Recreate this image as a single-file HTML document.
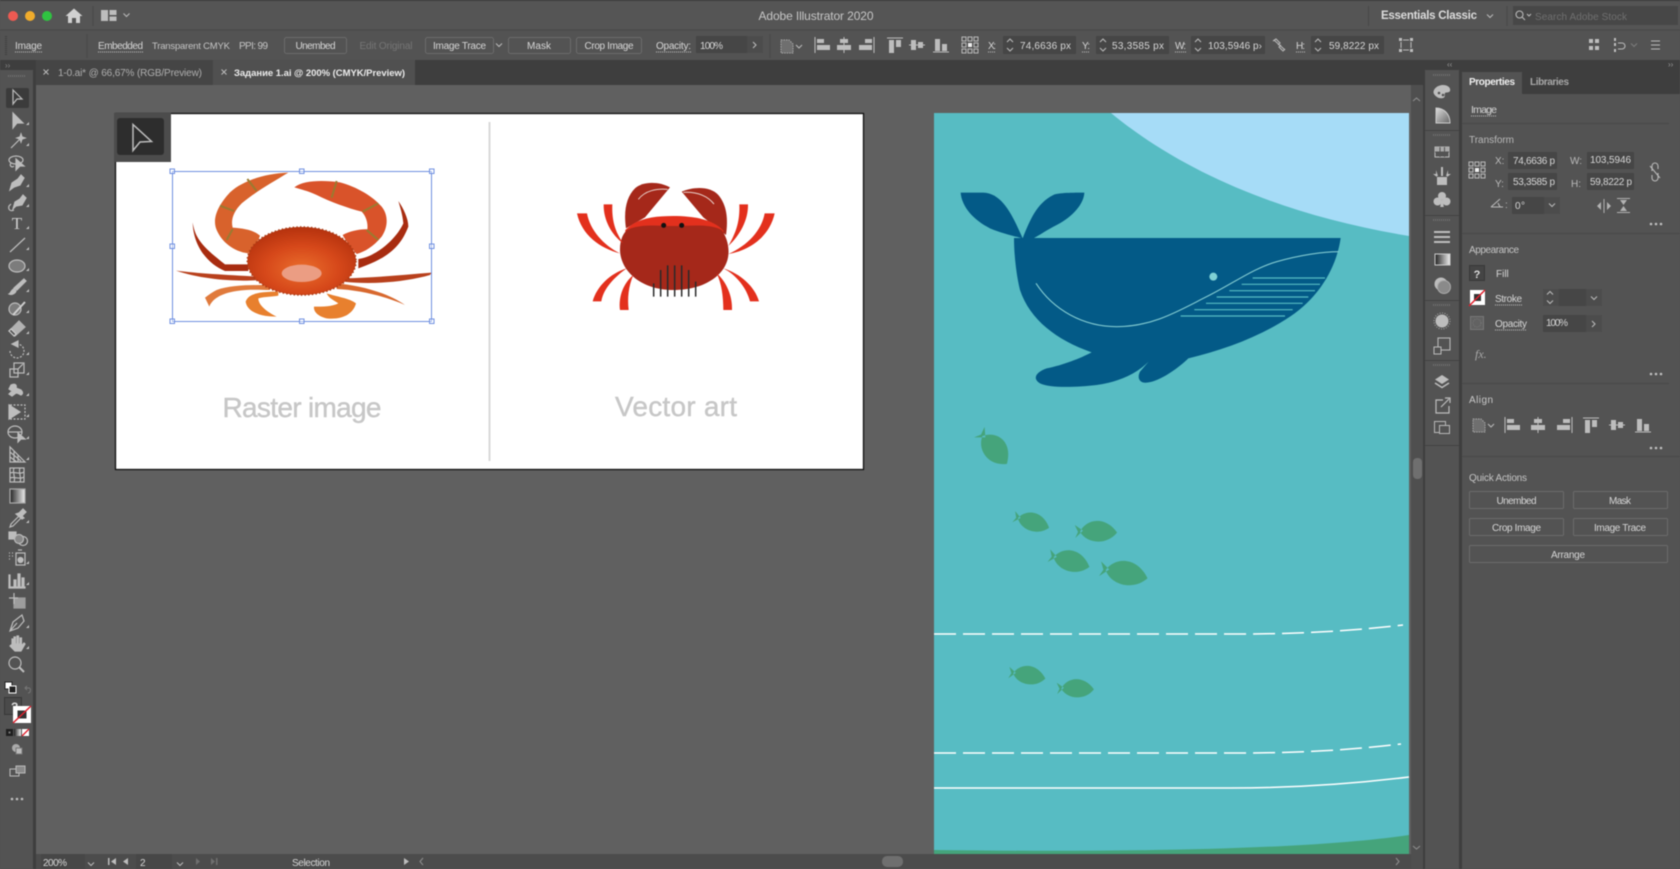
<!DOCTYPE html>
<html><head><meta charset="utf-8"><title>Adobe Illustrator 2020</title>
<style>
html,body{margin:0;padding:0;background:#535353;overflow:hidden}
svg{display:block;position:absolute;left:0;top:0;filter:blur(.4px)}
text{font-family:"Liberation Sans",sans-serif;font-size:10px;fill:#d6d6d6}
.b{fill:none;stroke:#6b6b6b;stroke-width:1}
.f{fill:#464646}
.s{fill:none;stroke:#bdbdbd;stroke-width:1.2}
.k{fill:none;stroke:#b8b8b8;stroke-width:1.1}
.i{fill:#bdbdbd}
.u{stroke:#bdbdbd;stroke-width:1;stroke-dasharray:1 1}
.c{text-anchor:middle}
</style></head><body>
<svg width="1680" height="869" viewBox="0 0 1680 869" xmlns="http://www.w3.org/2000/svg">
<defs>
<g id="a1"><path class="i" d="M-7.5-8h1v16h-1zM-5-6h7v4h-7zM-5 0h13v5h-13z"/></g>
<g id="a2"><path class="i" d="M-.5-8h1v16h-1zM-4-6h8v4h-8zM-7 0h14v5h-14z"/></g>
<g id="a3"><path class="i" d="M6.500-8h1v16h-1zM-2-6h7v4h-7zM-8 0h13v5h-13z"/></g>
<g id="a4"><path class="i" d="M-8-7.500h16v1h-16zM-6-5h5v13h-5zM1-5h5v7h-5z"/></g>
<g id="a5"><path class="i" d="M-8-.5h16v1h-16zM-6-5h5v10h-5zM1-3h5v6h-5z"/></g>
<g id="a6"><path class="i" d="M-8 6.500h16v1h-16zM-6-6h5v12h-5zM1-1h5v7h-5z"/></g>
<g id="doc"><path d="M-6-6h8l4 4v9h-12z" fill="#6f6f6f" stroke="#a8a8a8" stroke-dasharray="1.500 1"/><path class="k" d="M9-1l3 3 3-3"/></g>
<g id="ref"><g fill="none" stroke="#b8b8b8"><rect x="-8" y="-8" width="4" height="4"/><rect x="-2" y="-8" width="4" height="4"/><rect x="4" y="-8" width="4" height="4"/><rect x="-8" y="-2" width="4" height="4"/><rect x="4" y="-2" width="4" height="4"/><rect x="-8" y="4" width="4" height="4"/><rect x="-2" y="4" width="4" height="4"/><rect x="4" y="4" width="4" height="4"/></g><rect x="-2" y="-2" width="4" height="4" fill="#eee"/></g>
<g id="spin"><path class="k" d="M-3-3l3-3 3 3M-3 3l3 3 3-3"/></g>
<path id="chev" class="k" d="M-3-1.500l3 3 3-3"/>
<path id="fish" fill="#45a47b" d="M6 1C12-11 31-15 43 3 32 16 12 13 6 1ZM9 0L1-6 4 1 1 7Z"/>
<g id="dots"><circle cx="-5" r="1.300" fill="#c0c0c0"/><circle r="1.300" fill="#c0c0c0"/><circle cx="5" r="1.300" fill="#c0c0c0"/></g>
<radialGradient id="cb" cx=".5" cy=".62" r=".62"><stop offset="0" stop-color="#ea6e2c"/><stop offset=".55" stop-color="#d6481a"/><stop offset="1" stop-color="#b5320e"/></radialGradient>
<linearGradient id="gr" x1="0" x2="1"><stop offset="0" stop-color="#222"/><stop offset="1" stop-color="#eee"/></linearGradient>
<linearGradient id="gs" x1="0" y1="0" x2="1" y2="1"><stop offset="0" stop-color="#ddd"/><stop offset="1" stop-color="#666"/></linearGradient>
</defs>

<!-- chrome backgrounds -->
<rect width="1680" height="869" fill="#535353"/>
<rect width="1680" height="1" fill="#3a3a3a"/>
<rect y="1" width="1680" height="29" fill="#555"/>
<rect y="30" width="1680" height="30" fill="#535353"/>
<rect y="29.500" width="1680" height="1" fill="#474747"/>
<rect y="60" width="1680" height="25" fill="#3e3e3e"/>
<rect y="60" width="34" height="10" fill="#3e3e3e"/>
<rect x="0" y="70" width="33" height="799" fill="#535353"/>
<rect x="33" y="70" width="3" height="799" fill="#3e3e3e"/>
<rect x="36" y="85" width="1375" height="769" fill="#606060"/>

<!-- title bar -->
<circle cx="13" cy="16" r="5" fill="#ee5a52"/><circle cx="30" cy="16" r="5" fill="#f0ac2c"/><circle cx="47" cy="16" r="5" fill="#2fc341"/>
<path d="M74 8.500L65.500 16H68v7h4v-5h4v5h4v-7h2.500z" fill="#d0d0d0"/>
<path d="M93 6v20" stroke="#484848"/>
<path d="M101 10h7v11h-7zM109.500 10h7v5h-7zM109.500 16.500h7v4.500h-7z" fill="#bdbdbd"/>
<use href="#chev" x="126.500" y="15"/>
<text x="816" y="20" class="c" style="font-size:12px;fill:#c6c6c6" textLength="115">Adobe Illustrator 2020</text>
<text x="1381" y="19" style="font-size:11.500px;font-weight:bold;fill:#dcdcdc" textLength="96">Essentials Classic</text>
<use href="#chev" x="1490" y="16"/>
<path d="M1368.500 6v20M1507 6v20" stroke="#484848"/>
<rect x="1513" y="6" width="165" height="19" fill="#474747"/>
<circle cx="1519.500" cy="14.500" r="3.500" class="k"/><path class="k" d="M1522 17l3 3M1527 14l2 2 2-2"/>
<text x="1535" y="20" style="fill:#6f6f6f" textLength="92">Search Adobe Stock</text>

<!-- control bar -->
<text x="15" y="49" textLength="27">Image</text><path class="u" d="M15 52h27"/>
<path d="M6 36v20" stroke="#3f3f3f" stroke-width="2" stroke-dasharray="1 1"/>
<path d="M87 34v24" stroke="#484848"/>
<text x="98" y="49" textLength="45">Embedded</text><path class="u" d="M98 52h45"/>
<text x="152" y="49" textLength="78" style="fill:#c4c4c4;font-size:9.500px">Transparent CMYK</text>
<text x="239" y="49" textLength="29" style="fill:#c4c4c4">PPI: 99</text>
<rect class="b" x="284.500" y="37.500" width="62" height="16" rx="2"/><text x="315.500" y="49" class="c" textLength="40">Unembed</text>
<text x="359.500" y="49" style="fill:#757575" textLength="53">Edit Original</text>
<rect class="b" x="425.500" y="37.500" width="68" height="16" rx="2"/><text x="459.500" y="49" class="c" textLength="53">Image Trace</text>
<use href="#chev" x="499" y="45"/>
<rect class="b" x="508.500" y="37.500" width="62" height="16" rx="2"/><text x="539" y="49" class="c" textLength="24">Mask</text>
<rect class="b" x="576.500" y="37.500" width="65" height="16" rx="2"/><text x="609" y="49" class="c" textLength="49">Crop Image</text>
<text x="656" y="49" textLength="35">Opacity:</text><path class="u" d="M656 52h35"/>
<rect class="f" x="696" y="36" width="51" height="17"/><rect x="747" y="36" width="16" height="17" fill="#4c4c4c"/>
<text x="700" y="49" textLength="23">100%</text><path class="k" d="M753 42l3 3-3 3"/>
<path d="M770 34v24" stroke="#484848"/>
<use href="#doc" x="787" y="46"/>
<use href="#a1" x="822" y="45"/><use href="#a2" x="844" y="45"/><use href="#a3" x="867" y="45"/>
<use href="#a4" x="895" y="45"/><use href="#a5" x="917" y="45"/><use href="#a6" x="941" y="45"/>
<use href="#ref" x="970" y="45"/>
<text x="988" y="49" textLength="8">X:</text><path class="u" d="M988 52h8"/>
<rect class="f" x="1003" y="36" width="73" height="18"/><use href="#spin" x="1010" y="45"/><text x="1020" y="49" textLength="51">74,6636 px</text>
<text x="1082" y="49" textLength="8">Y:</text><path class="u" d="M1082 52h8"/>
<rect class="f" x="1096" y="36" width="73" height="18"/><use href="#spin" x="1103" y="45"/><text x="1112" y="49" textLength="52">53,3585 px</text>
<text x="1175" y="49" textLength="11">W:</text><path class="u" d="M1175 52h11"/>
<rect class="f" x="1191" y="36" width="74" height="18"/><use href="#spin" x="1198" y="45"/><text x="1208" y="49" textLength="54">103,5946 p›</text>
<path class="k" d="M1273 41l3-2 4 4-2 2M1285 49l-2 2-4-4 2-2M1274 40l11 10"/>
<text x="1296" y="49" textLength="9">H:</text><path class="u" d="M1296 52h9"/>
<rect class="f" x="1311" y="36" width="73" height="18"/><use href="#spin" x="1318" y="45"/><text x="1329" y="49" textLength="50">59,8222 px</text>
<g transform="translate(1406,45)"><path class="k" d="M-5-3v6M5-3v6M-3-5h6M-3 5h6"/><path class="i" d="M-7-7h3v3h-3zM4-7h3v3h-3zM-7 4h3v3h-3zM4 4h3v3h-3z"/></g>
<g transform="translate(1594,45)"><path class="i" d="M-5-6h4v4h-4zM1-6h4v4h-4zM-5 1h4v4h-4zM1 1h4v4h-4z"/></g>
<g transform="translate(1620,45)"><path class="i" d="M-6-7h2v3h-2zM-6-2h2v3h-2zM-6 4h2v3h-2z"/><path class="k" d="M-2-2h4a3 3 0 0 1 0 6h-4"/></g>
<use href="#chev" x="1634" y="45" opacity=".4"/>
<path class="k" d="M1651 41h9M1651 45h9M1651 49h9"/>

<!-- tabs -->
<rect x="36" y="60" width="177" height="25" fill="#454545"/>
<rect x="213" y="60" width="202" height="25" fill="#505050"/>
<path d="M43.500 69.500l5 5m0-5l-5 5M221.500 69.500l5 5m0-5l-5 5" stroke="#bbb" fill="none"/>
<text x="58" y="76" style="fill:#aeaeae" textLength="144">1-0.ai* @ 66,67% (RGB/Preview)</text>
<text x="234" y="76" style="fill:#ececec;font-weight:bold;font-size:9.500px" textLength="171">Задание 1.ai @ 200% (CMYK/Preview)</text>
<text x="5" y="68" style="font-size:8px;fill:#888">››</text>
<path d="M8 76h18" stroke="#707070" stroke-width="2" stroke-dasharray="1 1"/>

<!-- left tools -->
<rect x="6" y="88" width="23" height="20" rx="2" fill="#3b3b3b"/>
<g class="s">
<g transform="translate(17,97)"><path class="s" d="M-4-7L5 2 0 2-4 7Z"/></g>
<g transform="translate(17,120)"><path class="i" d="M-4-7L6 3 0 3-4 8Z"/></g>
<g transform="translate(17,141)"><path class="s" d="M-6 7L3-2"/><path class="i" d="M4-7l1 3 3 1-3 1-1 3-1-3-3-1 3-1z"/></g>
<g transform="translate(17,162)"><ellipse class="s" cx="-1" cy="-2" rx="7" ry="4"/><path class="i" d="M-1-3L7 4 3 4-1 8Z"/><path class="s" d="M-6 1c-2 3 1 5 3 3"/></g>
<g transform="translate(17,182)"><path class="i" d="M4-7L7-4 3 3-3 5-7 8-5 1 1-3Z"/></g>
<g transform="translate(17,202)"><path class="i" d="M6-7L9-4 5 3-1 4-4 7-2 0 3-3Z"/><path class="s" d="M-3 8c-4 2-6-1-5-4l2-2"/></g>
<text x="17" y="229" class="c" style="font-size:17px;fill:#cfcfcf;font-family:'Liberation Serif',serif;stroke:none">T</text>
<path class="s" d="M10 252L25 238"/>
<ellipse cx="17" cy="266" rx="8" ry="6" fill="#7c7c7c" stroke="#bdbdbd"/>
<g transform="translate(17,287)"><path class="i" d="M7-8L9-6 0 3-3 1Z"/><path class="i" d="M-3 2L-1 4C-2 7-6 8-8 7-6 6-6 3-3 2Z"/></g>
<g transform="translate(17,308)"><circle cx="-2" cy="1" r="6" fill="#7c7c7c" stroke="#bdbdbd"/><path d="M-4 7L8-6" stroke="#cfcfcf" stroke-width="2"/></g>
<g transform="translate(17,328)"><path class="i" d="M-8 3L2-7 8-1-2 8Z" opacity=".9"/><path d="M-8 3L-3 8-1 6-6 1Z" fill="#535353" stroke="#ccc"/></g>
<g transform="translate(17,350)"><path class="s" stroke-dasharray="2 1.500" d="M-7 1A7 7 0 1 0 0-6"/><path class="i" d="M-5-6L1-9V-3Z"/></g>
<g transform="translate(17,370)"><rect class="s" x="-7" y="-1" width="8" height="8"/><rect class="s" x="-3" y="-7" width="10" height="10"/><path class="s" d="M1-1L6-6"/></g>
<g transform="translate(17,391)"><path class="i" d="M-6-6c4-2 6 0 5 3l5 2c2 2 2 4 0 5-2-1-3-2-5-2l-4 3-3-2 3-3-3-2z"/></g>
<g transform="translate(17,412)"><rect class="s" stroke-dasharray="2 1.500" x="-7" y="-7" width="15" height="14"/><path class="i" d="M-8-7L3 0-8 7Z"/></g>
<g transform="translate(17,433)"><ellipse class="s" cx="-2" cy="-1" rx="7" ry="6"/><path class="s" d="M-9-1H5"/><path class="i" d="M1 0L8 6 4 6 1 9Z"/></g>
<g transform="translate(17,455)"><path class="s" d="M-7-8V7H8ZM-7-3L4 6M-7 2L0 7M-3-4V7M1 0V7"/></g>
<g transform="translate(17,475)"><rect class="s" x="-7" y="-7" width="14" height="14"/><path class="s" d="M-7-2C-3-4 3 0 7-3M-7 3C-3 1 3 5 7 2M-3-7C-5-3-1 3-3 7M3-7C1-3 5 3 3 7"/></g>
<rect x="10" y="489" width="15" height="14" fill="url(#gr)" stroke="#aaa"/>
<g transform="translate(17,518)"><path class="s" d="M3-3L-6 6-7 9-4 8 5-1"/><path class="i" d="M2-5L6-9 9-6 5-2 7 0 5 1-1-4Z"/></g>
<g transform="translate(17,538)"><rect class="i" x="-8" y="-6" width="7" height="7"/><circle class="s" cx="6" cy="3" r="4.500"/><circle cx="2" cy="1" r="4.500" fill="#888" stroke="#bbb"/></g>
<g transform="translate(17,559)"><rect class="s" x="-1" y="-6" width="9" height="12"/><circle cx="3.500" cy="1" r="2.500" class="i"/><path d="M-8-6h1M-5-6h1M-8-3h1M-5-3h1M-8 0h1M1-9h4" stroke="#bbb"/></g>
<g transform="translate(17,580)"><path class="i" d="M-8-5h1V7h-1zM-3 0h2v7h-2zM1-6h2V7H1zM5-2h2v9H5z"/><path class="i" d="M-8 7h16v1h-16z"/></g>
<g transform="translate(17,601)"><rect class="i" x="-3" y="-3" width="11" height="10" opacity=".7"/><path class="s" d="M-8-3H1M-3-8V3"/></g>
<g transform="translate(17,623)"><path class="s" d="M-7 8L-4-1 5-8 7-2 1 5Z"/><path class="s" d="M-7 8L0 0"/></g>
<g transform="translate(17,644)"><path class="i" d="M-5 1V-5h1.500V0H-3V-7h1.500V0H0V-8h1.500V0H3V-6h1.500V2L7-1 8 0 4 7H-2L-7 2-6 1Z"/></g>
<g transform="translate(16,664)"><circle class="s" cx="-1" cy="-1" r="6"/><path d="M3 3L8 8" stroke="#bdbdbd" stroke-width="2"/></g>
</g>
<!-- tool corners -->
<path fill="#c0c0c0" d="M29 122v3h-3zM29 143v3h-3zM29 184v3h-3zM29 204v3h-3zM29 226v3h-3zM29 247v3h-3zM29 268v3h-3zM29 289v3h-3zM29 310v3h-3zM29 331v3h-3zM29 352v3h-3zM29 372v3h-3zM29 393v3h-3zM29 414v3h-3zM29 436v3h-3zM29 457v3h-3zM29 520v3h-3zM29 561v3h-3zM29 582v3h-3zM29 625v3h-3zM29 646v3h-3z"/>
<!-- colour chips -->
<rect x="5" y="682" width="7" height="7" fill="#fff" stroke="#222"/><rect x="9" y="686" width="7" height="7" fill="#222" stroke="#fff"/>
<path d="M25 688h4c2 0 2 5-1 5M27 686l-2 2 2 2" fill="none" stroke="#777"/>
<rect x="4.500" y="697.500" width="17" height="17" fill="#4a4a4a" stroke="#383838"/><text x="11" y="711" style="font-size:12px;font-weight:bold;fill:#ddd">?</text>
<rect x="13" y="706" width="18" height="17" fill="#fff"/><rect x="18" y="711" width="8" height="7" fill="#333" stroke="#333"/><path d="M13 723L31 706" stroke="#e01f2c" stroke-width="1.500"/>
<rect x="6" y="729" width="7" height="7" fill="#1e1e1e"/><rect x="8.500" y="731.500" width="2" height="2" fill="#777"/><rect x="14" y="729" width="7" height="7" fill="url(#gr)"/><rect x="22" y="729" width="7" height="7" fill="#fff"/><path d="M22 736L29 729" stroke="#e01f2c" stroke-width="1.300"/>
<g transform="translate(17,749)"><circle cx="-1" cy="-1" r="4" fill="#aaa"/><rect x="-1" y="-1" width="6" height="6" fill="#bbb" stroke="#777"/></g>
<g transform="translate(17,771)"><rect x="-7" y="-2" width="9" height="7" fill="none" stroke="#bbb"/><rect x="-1" y="-5" width="9" height="7" fill="#8a8a8a" stroke="#bbb"/></g>
<use href="#dots" x="17" y="799"/>

<!-- left artboard -->
<rect x="115.500" y="113.500" width="748" height="356" fill="#fff" stroke="#111" stroke-width="1.300"/>
<path d="M489.500 122V461" stroke="#d9d9d9" stroke-width="2"/>
<g transform="translate(110,105) scale(.33333)">
<path fill="#d8622c" d="M535 203C470 205 400 225 360 262 325 300 305 340 320 375 335 410 370 440 415 445 430 430 445 410 450 392 430 375 400 370 368 368 362 345 370 320 395 295 430 265 490 230 535 203Z"/>
<path fill="#d9532a" d="M553 247C580 225 640 225 690 232 740 245 790 275 815 305 835 330 835 365 815 395 790 425 765 440 740 447 725 430 705 405 698 390 720 378 750 372 772 373 775 350 765 330 755 320 715 310 660 290 620 270 595 258 570 252 553 247Z"/>
<path stroke="#9a7a30" stroke-width="6" fill="none" d="M412 222L440 258M330 302L372 318M368 372L350 405M680 228L665 278M805 295L758 320M770 375L805 405"/>
<path fill="#a82c10" d="M248 352C255 395 270 420 345 478H415V498H345C300 480 250 430 248 352Z"/>
<path fill="#b8401c" d="M198 497C260 505 350 510 445 515L450 525C380 530 280 525 198 497Z"/>
<path fill="#e07a3c" d="M480 540C420 540 360 540 320 555 300 565 290 575 285 578L298 605C305 585 330 565 380 558 420 552 450 555 480 555Z"/>
<path fill="#e8802e" d="M505 560C450 560 415 565 407 590 410 615 440 635 500 635 470 620 445 600 445 580 465 575 490 575 505 572Z"/>
<path fill="#a82c10" d="M865 288C880 310 895 340 895 365 870 430 830 460 745 490V462C800 455 860 400 880 355 878 330 870 305 865 288Z"/>
<path fill="#b8401c" d="M965 503C880 510 790 518 700 520V530C790 540 890 530 960 510Z"/>
<path fill="#d8682e" d="M680 535C740 540 830 560 885 600 830 575 750 555 680 552Z"/>
<path fill="#e8802e" d="M650 565C680 575 720 580 738 595 730 625 700 645 650 640 625 635 610 620 612 605 640 605 665 605 685 595 670 585 655 578 650 565Z"/>
<ellipse cx="575" cy="468" rx="163" ry="102" fill="url(#cb)" stroke="#a83a14" stroke-width="5" stroke-dasharray="4 7"/>
<ellipse cx="575" cy="505" rx="60" ry="26" fill="#eb9d83"/>
</g>
<g fill="none" stroke="#6f8fe0">
<rect x="172.500" y="171.500" width="259" height="150"/>
<g fill="#fff" fill-opacity=".4"><rect x="170" y="169" width="4.500" height="4.500"/><rect x="299.500" y="169" width="4.500" height="4.500"/><rect x="429.500" y="169" width="4.500" height="4.500"/><rect x="170" y="244" width="4.500" height="4.500"/><rect x="429.500" y="244" width="4.500" height="4.500"/><rect x="170" y="319" width="4.500" height="4.500"/><rect x="299.500" y="319" width="4.500" height="4.500"/><rect x="429.500" y="319" width="4.500" height="4.500"/></g>
</g>
<rect x="114" y="113" width="57" height="49" fill="#4c4c4c"/>
<rect x="117" y="118" width="47" height="37" rx="3" fill="#2d2d2d"/>
<path d="M133 124.500L151.500 141.500 140 142 133 150.500Z" fill="none" stroke="#bdbdbd" stroke-width="1.500"/>
<text x="302" y="417" class="c" style="font-size:28px;fill:#c7c7c7;stroke:#c7c7c7;stroke-width:.4" textLength="159">Raster image</text>
<text x="676" y="416" class="c" style="font-size:28px;fill:#c7c7c7;stroke:#c7c7c7;stroke-width:.4" textLength="122">Vector art</text>

<g transform="translate(540,160) scale(.33333)">
<path fill="#a5281a" d="M390 82C360 65 310 62 285 85 260 110 250 150 258 205L315 172Z"/>
<path fill="#a5281a" d="M425 95C460 80 510 78 535 105 560 135 565 175 558 225L490 172Z"/>
<path fill="none" stroke="#e9cfc9" stroke-width="3" d="M295 118C315 92 350 85 383 88M430 97C470 95 500 105 522 132"/>
<path fill="#e3301d" d="M256 210C290 175 340 168 400 168 460 168 520 178 550 212L550 225H256Z"/>
<path fill="#a5281a" d="M240 268C240 240 250 218 262 210 300 190 360 198 400 198 450 198 510 190 545 210 560 230 568 260 565 285 560 340 500 390 400 390 300 390 240 330 240 268Z"/>
<circle cx="371" cy="196" r="7.500" fill="#111"/><circle cx="425" cy="196" r="7.500" fill="#111"/>
<path stroke="#2a2a2a" stroke-width="4.500" d="M341 370V410M362 330V410M383 316V410M404 316V410M425 316V410M446 330V410M467 365V410"/>
<g fill="#e3301d">
<path d="M111 160H141C150 210 190 255 240 280 180 265 125 225 111 160Z"/>
<path d="M191 133H217C215 180 225 215 250 250 215 225 190 180 191 133Z"/>
<path d="M158 424C170 380 210 340 260 325 225 350 190 385 184 424Z"/>
<path d="M240 450C235 410 250 370 280 345 265 380 262 415 266 450Z"/>
<path d="M704 160H674C665 210 625 255 565 282 635 270 690 225 704 160Z"/>
<path d="M624 133H598C600 180 590 215 565 258 600 225 625 180 624 133Z"/>
<path d="M657 424H630C620 385 590 345 550 325 600 340 645 380 657 424Z"/>
<path d="M576 450H550C550 410 545 370 530 340 560 365 578 410 576 450Z"/>
</g>
</g>

<!-- right artboard -->
<rect x="934" y="113" width="475" height="741" fill="#57bcc3"/>
<path d="M1111 113C1180 170 1280 215 1409 236V113Z" fill="#a6dcf7"/>
<g transform="translate(940,170) scale(.33333)">
<path fill="#035a87" d="M222 204H1202C1190 290 1140 380 1050 440 960 500 850 540 745 565 720 590 660 635 620 638 600 640 590 625 600 605L626 575C590 610 540 635 470 645 410 652 330 655 300 640 275 625 290 605 320 595 370 585 420 565 455 547 350 510 270 450 240 360 228 310 222 250 222 204Z"/>
<path fill="#035a87" d="M248 205C215 130 185 70 130 68H62C65 110 100 150 150 175 180 188 220 198 248 205Z"/>
<path fill="#035a87" d="M248 205C270 150 290 100 340 75 355 68 400 68 433 68 432 100 400 140 350 165 320 180 300 195 280 205Z"/>
<path fill="none" stroke="#7fc8cf" stroke-width="3.500" d="M288 340C340 420 430 470 530 470 640 470 720 420 800 380 880 340 940 295 1010 275 1080 255 1150 245 1197 245"/>
<circle cx="820" cy="320" r="12" fill="#7fd0d4"/>
<path stroke="#57bcc3" stroke-width="3.500" d="M938 324H1155M905 343H1140M868 362H1125M830 381H1105M798 400H1088M763 419H1058M722 438H1035"/>
</g>
<use href="#fish" transform="translate(979,431) rotate(45) scale(1,1.150)"/>
<use href="#fish" transform="translate(1013,516) rotate(14) scale(.88)"/>
<use href="#fish" transform="translate(1074,531) rotate(-2) scale(1)"/>
<use href="#fish" transform="translate(1048,555) rotate(12) scale(1)"/>
<use href="#fish" transform="translate(1099,568) rotate(8) scale(1.150)"/>
<use href="#fish" transform="translate(1008,672) rotate(6) scale(.88)"/>
<use href="#fish" transform="translate(1056,688) rotate(-2) scale(.88)"/>
<path fill="none" stroke="#fff" stroke-width="1.500" stroke-dasharray="22 7" d="M934 634H1240C1300 634 1350 631 1403 625"/>
<path fill="none" stroke="#fff" stroke-width="1.500" stroke-dasharray="22 7" d="M934 753H1240C1300 753 1350 750 1401 744"/>
<path fill="none" stroke="#fff" stroke-width="1.500" d="M934 788H1230C1300 788 1360 783 1409 777"/>
<path fill="#45a47b" d="M934 850C1100 852 1300 851 1409 835V854H934Z"/>

<!-- right scrollbar -->
<rect x="1411" y="85" width="14" height="784" fill="#4f4f4f"/>
<rect x="1413" y="458" width="9" height="21" rx="4" fill="#6f6f6f"/>
<path class="k" d="M1413 101l3.500-3 3.500 3M1413 846l3.500 3 3.500-3" opacity=".6"/>

<!-- status bar -->
<rect x="36" y="854" width="1375" height="15" fill="#4c4c4c"/>
<rect x="41" y="854" width="44" height="15" fill="#474747"/>
<text x="43" y="866" textLength="24">200%</text><use href="#chev" x="91" y="864"/>
<path class="i" d="M108 858h1.500v7H108zM116 858v7l-5-3.500zM128 858v7l-5-3.500z"/>
<rect x="136" y="854" width="36" height="15" fill="#474747"/><text x="140" y="866">2</text><use href="#chev" x="180" y="864"/>
<path fill="#6f6f6f" d="M196 858v7l4-3.500zM211 858v7l4-3.500zM216 858h1.500v7H216z"/>
<text x="311" y="866" class="c" textLength="38">Selection</text>
<path class="i" d="M404 858v7l5-3.500z"/><path class="k" d="M423 858l-3 3.500 3 3.500" opacity=".6"/>
<rect x="882" y="856" width="21" height="11" rx="5" fill="#6f6f6f"/>
<path class="k" d="M1396 858l3 3.500-3 3.500" opacity=".6"/>

<!-- dock -->
<rect x="1425" y="60" width="255" height="809" fill="#535353"/>
<rect x="1423" y="60" width="2" height="809" fill="#3e3e3e"/>
<rect x="1423" y="60" width="257" height="10" fill="#3e3e3e"/>
<rect x="1459" y="70" width="3" height="799" fill="#3e3e3e"/>
<text x="1447" y="67" style="font-size:8px;fill:#999">‹‹</text><text x="1668" y="67" style="font-size:8px;fill:#999">››</text>
<path stroke="#424242" d="M1425 130.500h34M1425 215.500h34M1425 300.500h34M1425 360.500h34M1425 445.500h34"/>
<path d="M1433 75h18M1433 135h18M1433 220h18M1433 305h18M1433 365h18" stroke="#6f6f6f" stroke-width="2" stroke-dasharray="1 1"/>
<g transform="translate(1442,91)"><path class="i" d="M-8 3c-2-4 3-9 9-9 5 0 8 3 7 6-1 2-4 1-5 2-1 2 1 4-2 5-4 1-7-1-9-4z"/><circle cx="-3" cy="2" r="1.300" fill="#535353"/><circle cx="1" cy="4" r="1.300" fill="#535353"/></g>
<path d="M1436 108c8 0 14 6 14 15h-14z" fill="url(#gs)" stroke="#ccc"/>
<g transform="translate(1442,152)"><rect x="-7" y="-5" width="14" height="10" fill="none" stroke="#bbb"/><path d="M-7-5h14v5h-14z" fill="#aaa"/><path d="M-2-5v10M2.500-5v10M-7 0h14" stroke="#535353"/></g>
<g transform="translate(1442,176)"><path class="i" d="M-5 1h10v8h-10zM-1-9l2 0 0 9-2 0zM-6-6l2 6-2 0zM6-6l-2 6 2 0z"/><path class="i" d="M-9-2l4 3v-3zM9-2l-4 3v-3z"/></g>
<g transform="translate(1442,200)"><circle class="i" cy="-4" r="4"/><circle class="i" cx="-4.500" cy="1.500" r="4"/><circle class="i" cx="4.500" cy="1.500" r="4"/><path class="i" d="M-.8 0h1.600l1 7h-3.600z"/></g>
<path class="i" d="M1434 231h16v2h-16zM1434 236h16v2h-16zM1434 241h16v2h-16z"/>
<rect x="1435" y="254" width="15" height="11" fill="url(#gr)" stroke="#ccc"/>
<circle cx="1441" cy="284" r="6.500" fill="#bdbdbd"/><circle cx="1444" cy="287" r="6.500" fill="#8a8a8a" stroke="#aaa"/>
<circle cx="1442" cy="321" r="6.500" fill="#bdbdbd"/><circle cx="1442" cy="321" r="8" fill="none" stroke="#aaa" stroke-dasharray="1 1.500"/>
<g transform="translate(1442,346)"><rect class="k" x="-4" y="-8" width="12" height="12"/><rect x="-8" y="1" width="7" height="7" fill="#535353" stroke="#bbb"/></g>
<path class="i" d="M1442 375l7 4.500-7 4.500-7-4.500z"/><path fill="none" stroke="#bdbdbd" stroke-width="1.500" d="M1435 383l7 4.500 7-4.500"/>
<path class="s" d="M1443 400h-7v13h13v-7M1441 407l8-8M1445 398h5v5"/>
<g fill="none" stroke="#b8b8b8"><rect x="1434.500" y="421.500" width="11" height="11"/><rect x="1439.500" y="425.500" width="10" height="8" fill="#535353"/></g>

<!-- panel -->
<rect x="1462" y="70" width="218" height="24" fill="#3e3e3e"/>
<rect x="1462" y="72" width="60" height="22" fill="#535353"/>
<text x="1469" y="85" style="font-weight:bold;fill:#f0f0f0" textLength="46">Properties</text>
<text x="1530" y="85" style="font-weight:bold;fill:#a8a8a8" textLength="39">Libraries</text>
<text x="1471" y="113" style="font-size:10.500px" textLength="26">Image</text><path class="u" d="M1471 116h26"/>
<path stroke="#484848" d="M1462 123.500h207M1462 233.500h218M1462 383.500h207M1462 456.500h218"/>
<text x="1469" y="143" style="fill:#b8b8b8" textLength="45">Transform</text>
<use href="#ref" x="1477" y="170"/>
<text x="1495" y="164" style="fill:#bbb">X:</text><rect class="f" x="1508" y="152" width="49" height="17"/><text x="1513" y="164" textLength="42">74,6636 p</text>
<text x="1570" y="164" style="fill:#bbb">W:</text><rect class="f" x="1587" y="152" width="47" height="17"/><text x="1590" y="163" textLength="41">103,5946</text>
<text x="1495" y="187" style="fill:#bbb">Y:</text><rect class="f" x="1508" y="173" width="49" height="17"/><text x="1513" y="185" textLength="42">53,3585 p</text>
<text x="1571" y="187" style="fill:#bbb">H:</text><rect class="f" x="1587" y="173" width="47" height="17"/><text x="1590" y="185" textLength="42">59,8222 p</text>
<g transform="translate(1655,172)"><path class="k" d="M-3-1v-5a3 3 0 0 1 6 0v3M3 1v5a3 3 0 0 1-6 0V3M-5-6l10 12"/></g>
<path class="k" d="M1491 207l9-8M1491 207h12M1498 203l2 4"/>
<text x="1505" y="208" style="fill:#bbb">:</text>
<rect class="f" x="1512" y="197" width="32" height="17"/><rect x="1544" y="197" width="16" height="17" fill="#4c4c4c"/><text x="1515" y="209" textLength="10">0°</text><use href="#chev" x="1552" y="205"/>
<path class="i" d="M1603.500 199h1v14h-1zM1607 202v8l4-4zM1601 202v8l-4-4z" opacity=".9"/>
<path class="i" d="M1617 198h13v1h-13zM1617 212h13v1h-13zM1620 200h7l-3.500 5zM1620 211h7l-3.500-5z" opacity=".9"/>
<use href="#dots" x="1656" y="224"/>
<text x="1469" y="253" style="fill:#c4c4c4" textLength="50">Appearance</text>
<rect x="1469.500" y="265.500" width="15" height="15" fill="#454545" stroke="#383838"/><text x="1477" y="278" class="c" style="font-size:11px;font-weight:bold;fill:#ddd">?</text>
<text x="1496" y="277">Fill</text>
<rect x="1470" y="290" width="15" height="15" fill="#fff"/><rect x="1474" y="294" width="7" height="7" fill="#333"/><path d="M1469 306L1485 290" stroke="#e01f2c" stroke-width="1.500"/>
<text x="1495" y="302" textLength="27">Stroke</text><path class="u" d="M1495 305h27"/>
<rect x="1543" y="289" width="59" height="17" fill="#4c4c4c"/><rect x="1559" y="289" width="27" height="17" class="f"/><use href="#spin" x="1550" y="297.500"/><use href="#chev" x="1594" y="298"/>
<rect x="1470.500" y="316.500" width="13" height="13" fill="#626262" stroke="#777"/><circle cx="1477" cy="323" r="4" fill="none" stroke="#777" stroke-dasharray="1 1"/>
<text x="1495" y="327" textLength="32">Opacity</text><path class="u" d="M1495 330h32"/>
<rect class="f" x="1543" y="315" width="43" height="17"/><rect x="1586" y="315" width="16" height="17" fill="#4c4c4c"/><text x="1546" y="326" textLength="22">100%</text><path class="k" d="M1592 321l3 3-3 3"/>
<text x="1475" y="358" style="font-family:'Liberation Serif',serif;font-style:italic;font-size:12px;fill:#aaa">fx.</text>
<use href="#dots" x="1656" y="374"/>
<text x="1469" y="403" style="fill:#c8c8c8" textLength="24">Align</text>
<use href="#doc" x="1479" y="425"/>
<use href="#a1" x="1512" y="425"/><use href="#a2" x="1538" y="425"/><use href="#a3" x="1565" y="425"/>
<use href="#a4" x="1591" y="425"/><use href="#a5" x="1617" y="425"/><use href="#a6" x="1643" y="425"/>
<use href="#dots" x="1656" y="448"/>
<text x="1469" y="481" style="fill:#c4c4c4" textLength="58">Quick Actions</text>
<rect class="b" x="1469.500" y="491.500" width="94" height="17" rx="1"/><text x="1516.500" y="504" class="c" textLength="40">Unembed</text>
<rect class="b" x="1573.500" y="491.500" width="94" height="17" rx="1"/><text x="1620" y="504" class="c" textLength="22">Mask</text>
<rect class="b" x="1469.500" y="518.500" width="94" height="17" rx="1"/><text x="1516.500" y="531" class="c" textLength="49">Crop Image</text>
<rect class="b" x="1573.500" y="518.500" width="94" height="17" rx="1"/><text x="1620" y="531" class="c" textLength="52">Image Trace</text>
<rect class="b" x="1469.500" y="545.500" width="198" height="17" rx="1"/><text x="1568" y="558" class="c" textLength="34">Arrange</text>
</svg>
</body></html>
